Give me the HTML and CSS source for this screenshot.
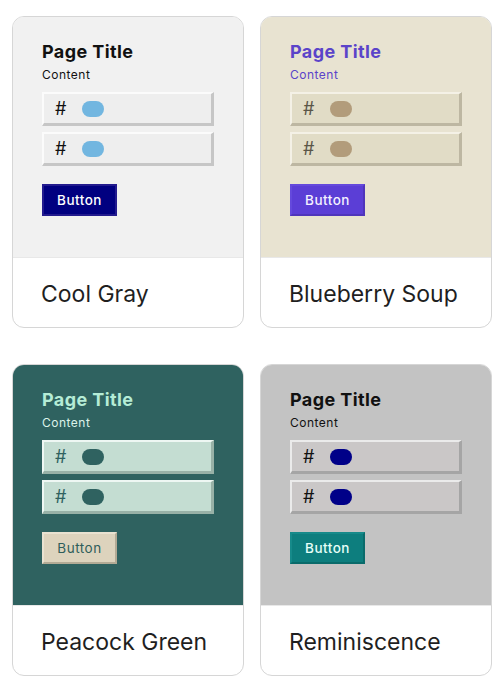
FILE: index.html
```html
<!DOCTYPE html>
<html>
<head>
<meta charset="utf-8">
<link rel="stylesheet" href="styles.css">
</head>
<body>
<div class="grid">
  <div class="card theme-cool">
    <div class="preview">
      <div class="title">Page Title</div>
      <div class="content">Content</div>
      <div class="field"><span class="hash">#</span><span class="pill"></span></div>
      <div class="field"><span class="hash">#</span><span class="pill"></span></div>
      <div class="btn">Button</div>
    </div>
    <div class="name">Cool Gray</div>
  </div>
  <div class="card theme-blue">
    <div class="preview">
      <div class="title">Page Title</div>
      <div class="content">Content</div>
      <div class="field"><span class="hash">#</span><span class="pill"></span></div>
      <div class="field"><span class="hash">#</span><span class="pill"></span></div>
      <div class="btn">Button</div>
    </div>
    <div class="name">Blueberry Soup</div>
  </div>
  <div class="card theme-peacock">
    <div class="preview">
      <div class="title">Page Title</div>
      <div class="content">Content</div>
      <div class="field"><span class="hash">#</span><span class="pill"></span></div>
      <div class="field"><span class="hash">#</span><span class="pill"></span></div>
      <div class="btn">Button</div>
    </div>
    <div class="name">Peacock Green</div>
  </div>
  <div class="card theme-remin">
    <div class="preview">
      <div class="title">Page Title</div>
      <div class="content">Content</div>
      <div class="field"><span class="hash">#</span><span class="pill"></span></div>
      <div class="field"><span class="hash">#</span><span class="pill"></span></div>
      <div class="btn">Button</div>
    </div>
    <div class="name">Reminiscence</div>
  </div>
</div>
</body>
</html>
```

FILE: styles.css
```css
html, body {
  margin: 0;
  padding: 0;
  background: #ffffff;
}
body {
  font-family: Inter, "Liberation Sans", sans-serif;
}
.grid {
  display: grid;
  grid-template-columns: 232px 232px;
  column-gap: 16px;
  row-gap: 36px;
  padding: 16px 12px 0 12px;
}
.card {
  width: 232px;
  height: 312px;
  box-sizing: border-box;
  border: 1px solid #d6d6d6;
  border-radius: 12px;
  overflow: hidden;
  display: flex;
  flex-direction: column;
  background: #fff;
}
.preview {
  height: 240px;
  box-sizing: border-box;
  padding: 24px 29px 0 29px;
  display: flex;
  flex-direction: column;
  align-items: flex-start;
}
.title {
  font-size: 18px;
  font-weight: 700;
  line-height: 21px;
  letter-spacing: 0.4px;
}
.content {
  font-size: 12px;
  line-height: 14px;
  margin-top: 6px;
  margin-bottom: 10px;
  letter-spacing: 0.5px;
}
.field {
  width: 172px;
  height: 34px;
  box-sizing: border-box;
  border-style: solid;
  border-width: 2px 3px 3px 2px;
  display: flex;
  align-items: center;
  padding-left: 11px;
  margin-bottom: 6px;
}
.hash {
  font-size: 18px;
  width: 16px;
  line-height: 20px;
}
.pill {
  width: 22px;
  height: 16px;
  border-radius: 8px;
  margin-left: 11px;
}
.btn {
  margin-top: 12px;
  width: 75px;
  height: 32px;
  box-sizing: border-box;
  border: 2px solid;
  display: flex;
  align-items: center;
  justify-content: center;
  font-size: 13.5px;
  font-weight: 500;
  letter-spacing: 0.5px;
}
.name {
  flex: 1;
  border-top: 1px solid #e8e8e8;
  display: flex;
  align-items: center;
  padding-left: 28px;
  font-size: 23px;
  color: #1f1f1f;
  padding-top: 3px;
}

/* Cool Gray */
.theme-cool .preview { background: #f1f1f1; }
.theme-cool .title, .theme-cool .content, .theme-cool .hash { color: #111111; }
.theme-cool .field { background: #eeeeee; border-color: #fbfbfb #c6c6c6 #c6c6c6 #fbfbfb; }
.theme-cool .pill { background: #72b6e0; }
.theme-cool .btn { background: #010080; border-color: #231b8e; color: #ffffff; }

/* Blueberry Soup */
.theme-blue .preview { background: #e8e3d1; }
.theme-blue .title, .theme-blue .content { color: #5b44c9; }
.theme-blue .hash { color: #5a5648; }
.theme-blue .field { background: #e1dcc6; border-color: #f4f1e6 #bdb7a2 #bdb7a2 #f4f1e6; }
.theme-blue .pill { background: #b29c7b; }
.theme-blue .btn { background: #5b3ed6; border-color: #6449dc #4f35bb #4f35bb #6449dc; color: #f4f1ff; }

/* Peacock Green */
.theme-peacock .preview { background: #2f6260; }
.theme-peacock .title { color: #b5ecd6; }
.theme-peacock .content { color: #dcf3ea; }
.theme-peacock .hash { color: #2f6260; }
.theme-peacock .field { background: #c4ddd2; border-color: #eef7f3 #98b1a7 #98b1a7 #eef7f3; }
.theme-peacock .pill { background: #2f6260; }
.theme-peacock .btn { background: #ddd3bd; border-color: #e9e2d1 #b3aa95 #b3aa95 #e9e2d1; color: #2f5e5b; font-weight: 400; }

/* Reminiscence */
.theme-remin .preview { background: #c3c3c3; }
.theme-remin .title, .theme-remin .content, .theme-remin .hash { color: #111111; }
.theme-remin .field { background: #cac7c7; border-color: #ebebeb #a5a5a5 #a5a5a5 #ebebeb; }
.theme-remin .pill { background: #000088; }
.theme-remin .btn { background: #0d7e7e; border-color: #168a8a #0a6b6b #0a6b6b #168a8a; color: #e6fff8; }
```
